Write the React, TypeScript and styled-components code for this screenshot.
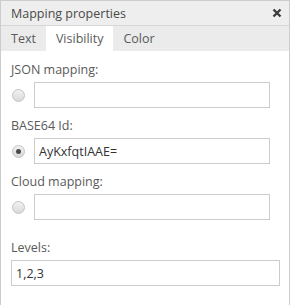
import React from 'react';
import styled, { createGlobalStyle } from 'styled-components';

const GlobalStyle = createGlobalStyle`
  html, body {
    margin: 0;
    padding: 0;
    background: #ffffff;
  }
  body {
    font-family: 'Open Sans', 'Noto Sans', sans-serif;
    font-size: 12.5px;
    color: #5a5a5a;
  }
`;

const Panel = styled.div`
  width: 290px;
  height: 305px;
  box-sizing: border-box;
  border: 1px solid #cccccc;
  border-bottom: none;
  display: flex;
  flex-direction: column;
  background: #ffffff;
`;

const TitleBar = styled.div`
  height: 24px;
  flex: none;
  display: flex;
  align-items: center;
  justify-content: space-between;
  padding: 0 5px 0 10px;
  background: #eeeeee;
  border-bottom: 1px solid #d6d6d6;
  color: #4a4a4a;
  font-size: 12.5px;
`;

const CloseButton = styled.button`
  width: 14px;
  height: 14px;
  padding: 0;
  border: none;
  background: none;
  display: flex;
  align-items: center;
  justify-content: center;
  cursor: pointer;
`;

const TabBar = styled.div`
  height: 25px;
  flex: none;
  display: flex;
  background: #ebebeb;
`;

const Tab = styled.div<{ $active?: boolean }>`
  display: flex;
  align-items: center;
  padding: 0 10px;
  background: ${(p) => (p.$active ? '#ffffff' : 'transparent')};
  color: #5a5a5a;
  font-size: 12.5px;
  cursor: pointer;
`;

const Content = styled.div`
  flex: 1;
  display: flex;
  flex-direction: column;
  gap: 9px;
  padding: 10px 9px 0 10px;
`;

const Field = styled.div<{ $spaced?: boolean }>`
  display: flex;
  flex-direction: column;
  gap: 3px;
  margin-top: ${(p) => (p.$spaced ? '10px' : '0')};
`;

const Label = styled.label`
  line-height: 18px;
  font-size: 12.5px;
  color: #5a5a5a;
`;

const Row = styled.div`
  display: flex;
  align-items: center;
  gap: 9px;
  padding-left: 1px;
`;

const Radio = styled.span<{ $checked?: boolean }>`
  width: 13px;
  height: 13px;
  flex: none;
  box-sizing: border-box;
  border-radius: 50%;
  border: 1px solid #c4c4c4;
  background: linear-gradient(#f2f2f2, #d9d9d9);
  display: flex;
  align-items: center;
  justify-content: center;

  &::after {
    content: '';
    display: ${(p) => (p.$checked ? 'block' : 'none')};
    width: 5px;
    height: 5px;
    border-radius: 50%;
    background: #4a4a4a;
  }
`;

const Input = styled.input<{ $narrow?: boolean }>`
  box-sizing: border-box;
  height: 26px;
  width: ${(p) => (p.$narrow ? '236px' : '269px')};
  border: 1px solid #cccccc;
  padding: 0 4px;
  font-family: 'Open Sans', 'Noto Sans', sans-serif;
  font-size: 12.5px;
  color: #333333;
  background: #ffffff;
  outline: none;
`;

const CloseIcon = () => (
  <svg width="10" height="10" viewBox="0 0 10 10">
    <path d="M1.5 1.5 L8.5 8.5 M8.5 1.5 L1.5 8.5" stroke="#3c3c3c" strokeWidth="2.4" strokeLinecap="butt" />
  </svg>
);

const tabs = ['Text', 'Visibility', 'Color'];

const App = () => {
  return (
    <>
      <GlobalStyle />
      <Panel>
        <TitleBar>
          <span>Mapping properties</span>
          <CloseButton aria-label='close'>
            <CloseIcon />
          </CloseButton>
        </TitleBar>
        <TabBar>
          {tabs.map((t) => (
            <Tab key={t} $active={t === 'Visibility'}>{t}</Tab>
          ))}
        </TabBar>
        <Content>
          <Field>
            <Label>JSON mapping:</Label>
            <Row>
              <Radio />
              <Input $narrow readOnly value='' />
            </Row>
          </Field>
          <Field>
            <Label>BASE64 Id:</Label>
            <Row>
              <Radio $checked />
              <Input $narrow readOnly value='AyKxfqtIAAE=' />
            </Row>
          </Field>
          <Field>
            <Label>Cloud mapping:</Label>
            <Row>
              <Radio />
              <Input $narrow readOnly value='' />
            </Row>
          </Field>
          <Field $spaced>
            <Label>Levels:</Label>
            <Input readOnly value='1,2,3' />
          </Field>
        </Content>
      </Panel>
    </>
  );
};

export default App;
